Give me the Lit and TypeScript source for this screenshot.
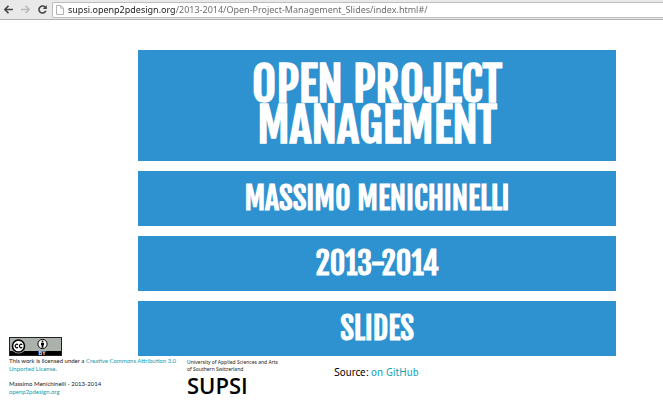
import { LitElement, html, css } from "lit";
import { customElement } from "lit/decorators.js";

@customElement("browser-bar")
class BrowserBar extends LitElement {
  static styles = css`
    :host { display: block; }
    .bar {
      display: flex;
      align-items: center;
      height: 19px;
      background: #e9e9e9;
      border-bottom: 1px solid #b0b0b0;
    }
    .nav {
      width: 17px;
      height: 18px;
      padding: 0;
      border: 0;
      background: none;
      display: grid;
      place-items: center;
    }
    .address {
      flex: 1;
      display: flex;
      align-items: center;
      height: 14px;
      margin-left: 1px;
      background: #fff;
      border: 1px solid #bdbdbd;
      border-right: 0;
      border-radius: 2px 0 0 2px;
    }
    .page { margin: 0 4px 0 3px; }
    .url {
      flex: 1;
      min-width: 0;
      height: 14px;
      border: 0;
      padding: 0;
      outline: 0;
      font: 9px/14px "Lucida Grande", "Noto Sans", sans-serif;
      color: transparent;
      background: linear-gradient(to right, #1c1c1c 107px, #666 107px);
      background-clip: text;
      -webkit-background-clip: text;
    }
  `;
  render() {
    return html`
      <nav class="bar" aria-label="Browser">
        <button class="nav" aria-label="Back">
          <svg width="9" height="9" viewBox="0 0 9 9" fill="none" stroke="#444" stroke-width="1.6"><path d="M4.5.8.9 4.5l3.6 3.7M1 4.5h8" /></svg>
        </button>
        <button class="nav" aria-label="Forward">
          <svg width="9" height="9" viewBox="0 0 9 9" fill="none" stroke="#bbb" stroke-width="1.6"><path d="M4.5.8 8.1 4.5 4.5 8.2M8 4.5H0" /></svg>
        </button>
        <button class="nav" aria-label="Reload">
          <svg width="9" height="9" viewBox="0 0 9 9"><path d="M7 2.1A3.5 3.5 0 1 0 7.8 5.7" fill="none" stroke="#444" stroke-width="1.6" /><path d="M8.8 0v4H4.8z" fill="#444" /></svg>
        </button>
        <div class="address">
          <svg class="page" width="8" height="10" viewBox="0 0 8 10" fill="#fff" stroke="#aaa" stroke-width=".9"><path d="M.5.5h4.3l2.7 2.7v6.3h-7zM4.8.5v2.7h2.7" /></svg>
          <input class="url" aria-label="Address" value="supsi.openp2pdesign.org/2013-2014/Open-Project-Management_Slides/index.html#/" />
        </div>
      </nav>
    `;
  }
}

@customElement("app-root")
class AppRoot extends LitElement {
  static styles = css`
    :host {
      display: block;
      min-height: 100vh;
      background: #fff;
      color: #222;
      font-family: Lato, sans-serif;
    }
    .layout {
      display: grid;
      grid-template-columns: 138px 1fr 47px;
      padding-top: 30px;
    }
    .slide {
      grid-column: 2;
      display: flex;
      flex-direction: column;
      gap: 10px;
    }
    .title, .line {
      margin: 0;
      background: #2e92d1;
      color: #fff;
      text-align: center;
      text-transform: uppercase;
      font-family: "Fjalla One", "Liberation Sans Narrow", "Liberation Sans", sans-serif;
      font-weight: 700;
    }
    .title { padding: 14px 80px 15px; font-size: 47px; line-height: 41px; }
    .title span { display: block; }
    .line { padding: 12px 0 11px; font-size: 30px; line-height: 32px; }
    .badge {
      grid-column: 1;
      grid-row: 1;
      align-self: end;
      margin-left: 9px;
      line-height: 0;
    }
    .footer {
      grid-column: 1 / -1;
      display: flex;
      align-items: flex-start;
      padding-left: 9px;
    }
    p { margin: 0; }
    a { color: #13a0b0; text-decoration: none; }
    .license { width: 178px; padding-top: 1px; font-size: 6px; line-height: 8px; }
    .author { margin-top: 7px; }
    .school { width: 147px; padding-top: 3px; font: 5px/7px "Noto Sans", sans-serif; }
    .logo { padding-top: 1px; font: 600 22px/22px "Open Sans", sans-serif; color: #000; }
    .source { padding-top: 9px; font: 11px/14px "PT Sans", Lato, sans-serif; color: #000; }
  `;
  render() {
    return html`
      <browser-bar></browser-bar>
      <main class="layout">
        <section class="slide">
          <h1 class="title"><span>Open Project</span><span>Management</span></h1>
          <h2 class="line">Massimo Menichinelli</h2>
          <h2 class="line">2013-2014</h2>
          <h2 class="line">Slides</h2>
        </section>
        <a class="badge" href="#license" aria-label="Creative Commons Attribution">
          <svg width="53" height="19" viewBox="0 0 53 19">
            <rect x=".5" y=".5" width="52" height="18" fill="#aab2ab" stroke="#222" />
            <rect x="1" y="14" width="51" height="4" fill="#000" />
            <circle cx="9.5" cy="9" r="7.5" fill="#aab2ab" />
            <circle cx="9.5" cy="9" r="6" fill="#fff" stroke="#000" stroke-width="1.6" />
            <path d="M9 7.7A1.7 1.7 0 1 0 9 10.3M13.2 7.7a1.7 1.7 0 1 0 0 2.6" fill="none" stroke="#000" stroke-width="1.2" />
            <circle cx="33.5" cy="7" r="4.6" fill="#fff" stroke="#000" />
            <circle cx="33.5" cy="4.4" r=".9" />
            <path d="M32 5.7h3v2.6h-.6v2.4h-1.8V8.300H32z" />
            <text x="33" y="18" font-family="Liberation Sans" font-size="5" font-weight="700" fill="#fff" text-anchor="middle">BY</text>
          </svg>
        </a>
        <footer class="footer">
          <div class="license">
            <p>This work is licensed under a <a href="#license">Creative Commons Attribution 3.0<br />Unported License</a>.</p>
            <p class="author">Massimo Menichinelli - 2013-2014<br /><a href="#home">openp2pdesign.org</a></p>
          </div>
          <div class="school">
            <p>University of Applied Sciences and Arts<br />of Southern Switzerland</p>
            <p class="logo">SUPSI</p>
          </div>
          <p class="source">Source: <a href="#github">on GitHub</a></p>
        </footer>
      </main>
    `;
  }
}
